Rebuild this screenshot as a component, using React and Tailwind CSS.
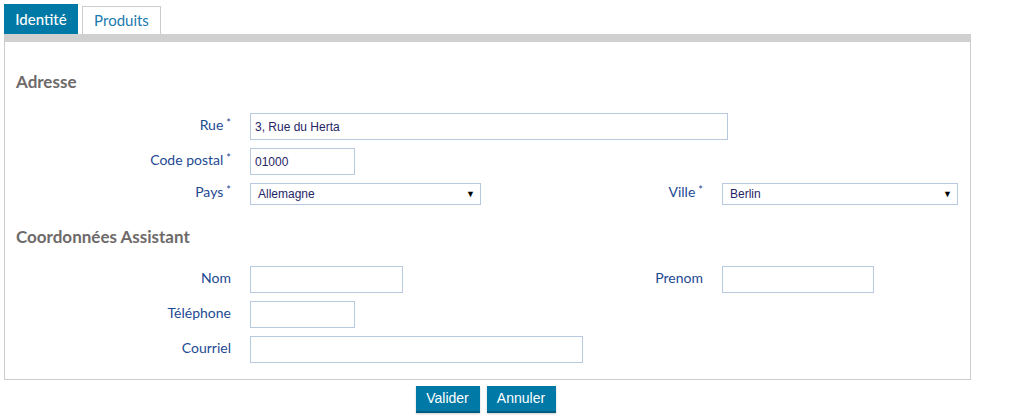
import { useState } from "react";

const labelCls = "text-right text-[14px] text-[#1d4a93] font-['Lato',sans-serif] leading-[16px] -mt-[3px]";
const inputCls = "block h-[27px] border border-[#b7c9df] bg-white px-[4px] text-[12px] text-[#1f2566] font-['Liberation_Sans',Arial,sans-serif] outline-none";

const Label = ({ children, required, className = "" }) => (
  <div className={labelCls + " " + className}>
    {children}
    {required && <span className="ml-[3px] relative -top-[3px] text-[11px]">*</span>}
  </div>
);

const Select = ({ value, options, width }) => (
  <div className="relative h-[22px]" style={{ width }}>
    <select
      defaultValue={value}
      className="block appearance-none w-full h-[22px] border border-[#b7c9df] bg-white pl-[7px] text-[12px] text-[#1f2566] font-['Liberation_Sans',Arial,sans-serif] outline-none"
    >
      {options.map(o => <option key={o}>{o}</option>)}
    </select>
    <span className="absolute right-[6px] top-[5px] text-[9px] leading-[12px] text-black pointer-events-none">▼</span>
  </div>
);

export default function App() {
  const [tab, setTab] = useState("identite");

  return (
    <div className="pl-[4px] pt-[4px] bg-white min-h-[417px] w-[1029px]">
      {/* Tabs */}
      <div className="flex items-end gap-[4px] h-[30px] font-['Lato',sans-serif]">
        <button
          onClick={() => setTab("identite")}
          className="h-[30px] w-[74px] bg-[#0079a6] text-white text-[15px] font-medium"
        >
          Identité
        </button>
        <button
          onClick={() => setTab("produits")}
          className="h-[28px] w-[79px] border border-b-0 border-[#cccccc] bg-white text-[#1b7ab0] text-[15px]"
        >
          Produits
        </button>
      </div>

      {/* Panel */}
      <div className="w-[967px] border-t-[8px] border-t-[#d0d0d0] border-x border-b border-[#cccccc] pb-[16px]">
        <h2 className="mt-[30px] ml-[11px] h-[20px] leading-[20px] text-[17px] font-bold text-[#6e6a6a] font-['Lato',sans-serif]">
          Adresse
        </h2>

        <div className="mt-[21px] flex items-center h-[27px]">
          <Label required className="w-[226px]">Rue</Label>
          <input className={inputCls + " ml-[19px] w-[478px]"} defaultValue="3, Rue du Herta" />
        </div>

        <div className="mt-[8px] flex items-center h-[27px]">
          <Label required className="w-[226px]">Code postal</Label>
          <input className={inputCls + " ml-[19px] w-[105px]"} defaultValue="01000" />
        </div>

        <div className="mt-[8px] flex items-center h-[22px]">
          <Label required className="w-[226px]">Pays</Label>
          <div className="ml-[19px] w-[260px]">
            <Select value="Allemagne" options={["Allemagne", "France", "Belgique"]} width={231} />
          </div>
          <Label required className="w-[193px]">Ville</Label>
          <div className="ml-[19px]">
            <Select value="Berlin" options={["Berlin", "Munich", "Hambourg"]} width={236} />
          </div>
        </div>

        <h2 className="mt-[22px] ml-[11px] h-[20px] leading-[20px] text-[17px] font-bold text-[#6e6a6a] font-['Lato',sans-serif]">
          Coordonnées Assistant
        </h2>

        <div className="mt-[19px] flex items-center h-[27px]">
          <Label className="w-[226px]">Nom</Label>
          <div className="ml-[19px] w-[260px]">
            <input className={inputCls + " w-[153px]"} />
          </div>
          <Label className="w-[193px]">Prenom</Label>
          <input className={inputCls + " ml-[19px] w-[152px]"} />
        </div>

        <div className="mt-[8px] flex items-center h-[27px]">
          <Label className="w-[226px]">Téléphone</Label>
          <input className={inputCls + " ml-[19px] w-[105px]"} />
        </div>

        <div className="mt-[8px] flex items-center h-[27px]">
          <Label className="w-[226px]">Courriel</Label>
          <input className={inputCls + " ml-[19px] w-[333px]"} />
        </div>
      </div>

      {/* Actions */}
      <div className="w-[963px] mt-[6px] flex justify-center gap-[7px] font-['Liberation_Sans',Arial,sans-serif]">
        <button className="h-[27px] w-[64px] bg-[#0079a6] border-b-[2px] border-[#005c80] text-white text-[14px] shadow-[0_1px_2px_rgba(0,0,0,0.2)]">
          Valider
        </button>
        <button className="h-[27px] w-[69px] bg-[#0079a6] border-b-[2px] border-[#005c80] text-white text-[14px] shadow-[0_1px_2px_rgba(0,0,0,0.2)]">
          Annuler
        </button>
      </div>
    </div>
  );
}
